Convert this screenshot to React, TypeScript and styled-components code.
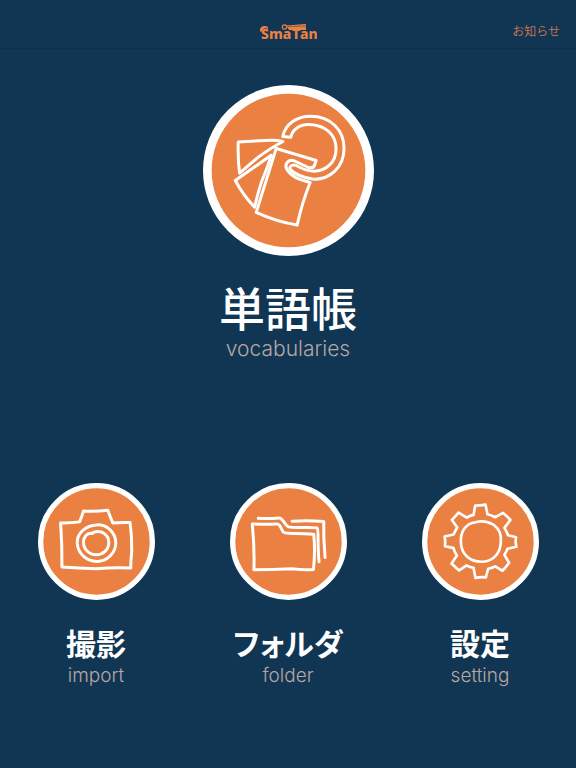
import React from "react";
import styled, { createGlobalStyle } from "styled-components";

const GlobalStyle = createGlobalStyle`
  * { box-sizing: border-box; }
  body {
    margin: 0;
    background: #103654;
    font-family: Inter, "Noto Sans CJK JP", sans-serif;
  }
`;

const Page = styled.div`
  min-height: 100vh;
  display: flex;
  flex-direction: column;
  background: #103654;
`;

const Header = styled.header`
  display: grid;
  grid-template-columns: 1fr auto 1fr;
  align-items: center;
  height: 49px;
  padding: 16px 16px 0;
  border-bottom: 1px solid #0f2f4b;
`;

const Brand = styled.h1`
  grid-column: 2;
  margin: 0;
  line-height: 0;
`;

const NewsLink = styled.a`
  justify-self: end;
  color: #c4714d;
  font-size: 12px;
  line-height: 16px;
  text-decoration: none;
`;

const Main = styled.main`
  flex: 1;
  display: flex;
  flex-direction: column;
`;

const MenuButton = styled.button`
  display: flex;
  flex-direction: column;
  align-items: center;
  padding: 0;
  border: 0;
  background: none;
  color: #fff;
  font-family: inherit;
  cursor: pointer;
`;

const HeroArea = styled.section`
  display: flex;
  justify-content: center;
  padding: 36px 16px 122px;
`;

const MenuGrid = styled.nav`
  display: grid;
  grid-template-columns: repeat(3, 1fr);
`;

const Badge = styled.svg<{ $size: number }>`
  display: block;
  width: ${(p) => p.$size}px;
  height: ${(p) => p.$size}px;
  fill: none;
  stroke: #fff;
  stroke-linecap: round;
  stroke-linejoin: round;
`;

const Title = styled.span<{ $large?: boolean }>`
  margin-top: 22px;
  margin-bottom: ${(p) => (p.$large ? 3 : 2)}px;
  font-size: ${(p) => (p.$large ? 46 : 30)}px;
  line-height: ${(p) => (p.$large ? 56 : 40)}px;
  font-weight: ${(p) => (p.$large ? 500 : 700)};
  font-family: "Noto Sans CJK JP", sans-serif;
  font-feature-settings: "palt";
`;

const Caption = styled.span<{ $large?: boolean }>`
  color: #b8a7a3;
  font-size: ${(p) => (p.$large ? 21 : 19)}px;
  line-height: 24px;
  font-weight: 300;
`;

function Logo() {
  return (
    <svg width="58" height="20" viewBox="0 0 58 20" role="img" aria-label="SmaTan">
      <text y="17" fill="#eb8043" fontFamily="Noto Sans, sans-serif" fontWeight="800" fontSize="14">
        <tspan x="2">Sma</tspan>
        <tspan x="33">T</tspan>
        <tspan x="41">an</tspan>
      </text>
      <path d="M1 9.500C0 5 5 2.500 9 5L9 7C6 5.500 4 6.500 3 9.500Z" fill="#eb8043" />
      <path d="M27 3.500L47 2V8H30Z" fill="#eb8043" />
      <path d="M28 4.500L47 4" stroke="#103654" strokeWidth=".5" />
      <circle cx="25.500" cy="5" r="2.200" fill="none" stroke="#eb8043" strokeWidth="1.200" />
    </svg>
  );
}

function CardsIcon() {
  return (
    <Badge $size={171} viewBox="13 15 514 514" strokeWidth="9" aria-hidden="true">
      <circle cx="270" cy="272" r="244" fill="#eb8043" strokeWidth="26" />
      <path d="M253 170C260 133 294 109 337 109C397 109 437 151 437 205C437 263 393 300 346 298C315 295 286 281 275 268C272 262 278 253 290 256C305 261 318 274 346 274C382 274 413 248 413 207C413 163 380 136 333 134C303 133 281 149 277 172Z" />
      <path d="M335 308Q310 371 296 436Q234 426 173 398L233 206L353 242L348 257C345 263 337 265 330 263L292 245C277 236 263 244 262 260C265 276 286 293 306 299Z" />
      <path d="M253 185Q236 180 214 181L119 186Q117 235 123 280L180 231Q220 203 253 185Z" />
      <path d="M218 226L110 302Q134 347 168 382Q179 336 190 303Q208 260 218 226Z" />
    </Badge>
  );
}

function CameraIcon() {
  return (
    <Badge $size={117} viewBox="22 23 352 352" strokeWidth="9" aria-hidden="true">
      <circle cx="198" cy="199" r="168" fill="#eb8043" strokeWidth="16" />
      <path d="M90 143Q118 144 147 140Q154 124 159 107Q196 109 232 105Q239 124 247 143Q274 141 299 142Q305 184 304 228Q301 257 301 279Q248 277 197 281Q143 280 94 276Q95 210 90 143Z" />
      <path d="M198 149C229 147 255 171 256 201C257 232 232 258 201 259C169 260 142 236 140 204C139 174 166 150 198 149Z" />
      <path d="M186 173C214 161 235 180 235 202C235 224 217 239 197 239C176 239 158 222 159 200C160 184 170 172 186 175" />
    </Badge>
  );
}

function FolderIcon() {
  return (
    <Badge $size={117} viewBox="22 23 352 352" strokeWidth="9" aria-hidden="true">
      <circle cx="198" cy="199" r="168" fill="#eb8043" strokeWidth="16" />
      <path d="M89 146Q128 148 161 146C176 145 174 163 183 171C192 178 216 172 274 177Q279 231 273 283Q248 286 208 281Q148 284 94 284Q96 215 89 146Z" />
      <path d="M107 129Q140 131 168 128C184 127 184 150 198 155C222 160 249 154 284 158C290 163 284 209 290 260" />
      <path d="M209 138Q257 134 304 139Q303 191 308 247" />
    </Badge>
  );
}

function GearIcon() {
  return (
    <Badge $size={117} viewBox="22 23 352 352" strokeWidth="8" aria-hidden="true">
      <circle cx="198" cy="199" r="168" fill="#eb8043" strokeWidth="16" />
      <path d="M182 91Q197 91 213 88L219 117Q230 119 242 126L266 113Q277 122 288 134L270 158Q276 168 281 180L305 186Q302 201 306 215L279 221Q276 230 270 239L284 263Q276 275 264 287L242 274Q231 279 221 281L214 307Q198 305 183 309L177 278Q166 277 156 271L134 286Q122 276 111 265L127 241Q119 230 117 219L91 213Q93 198 90 184L117 178Q122 167 128 157L112 134Q122 124 132 112L157 127Q166 121 177 119Z" />
      <path d="M183 141C201 136 220 138 239 150C257 163 262 180 259 203C257 236 235 260 201 260C164 260 140 235 139 202C137 171 153 144 183 141Z" />
    </Badge>
  );
}

const menu = [
  { title: "撮影", caption: "import", Icon: CameraIcon },
  { title: "フォルダ", caption: "folder", Icon: FolderIcon },
  { title: "設定", caption: "setting", Icon: GearIcon },
];

export default function App() {
  return (
    <Page lang="ja">
      <GlobalStyle />
      <Header>
        <Brand>
          <Logo />
        </Brand>
        <NewsLink href="#news">お知らせ</NewsLink>
      </Header>
      <Main>
        <HeroArea>
          <MenuButton type="button">
            <CardsIcon />
            <Title $large>単語帳</Title>
            <Caption $large>vocabularies</Caption>
          </MenuButton>
        </HeroArea>
        <MenuGrid>
          {menu.map(({ title, caption, Icon }) => (
            <MenuButton type="button" key={caption}>
              <Icon />
              <Title>{title}</Title>
              <Caption>{caption}</Caption>
            </MenuButton>
          ))}
        </MenuGrid>
      </Main>
    </Page>
  );
}
